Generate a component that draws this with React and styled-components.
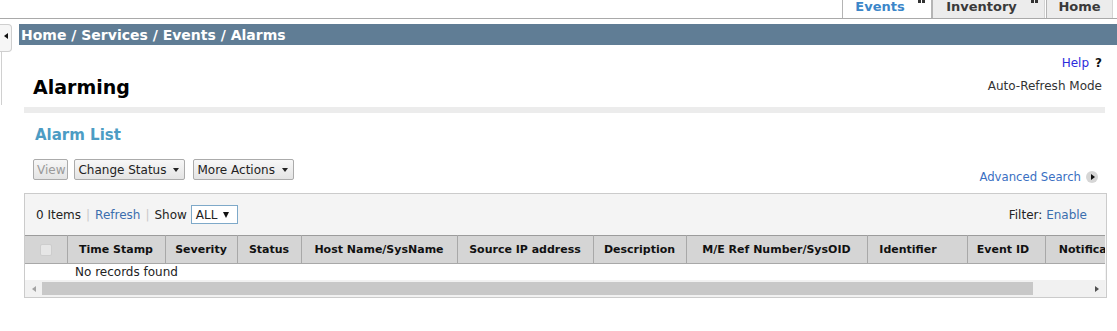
import React from "react";
import styled, { createGlobalStyle } from "styled-components";

const GlobalStyle = createGlobalStyle`
  html, body { margin: 0; padding: 0; background: #fff; }
  body { font-family: "DejaVu Sans", Verdana, sans-serif; font-size: 12px; color: #222; }
  * { box-sizing: border-box; }
`;

const Page = styled.div`
  width: 1117px;
  height: 331px;
  overflow: hidden;
`;

const TabsRow = styled.div`
  height: 19px;
  display: flex;
  justify-content: flex-end;
  border-bottom: 1px solid #a9a9a9;
  padding-right: 4px;
`;

const Tab = styled.div`
  position: relative;
  width: ${(p) => p.$w}px;
  height: 18px;
  margin-left: ${(p) => p.$gap || 0}px;
  padding-right: ${(p) => (p.$close ? 14 : 0)}px;
  background: ${(p) => (p.$active ? "#fff" : "#ececec")};
  border-left: 1px solid #b4b4b4;
  border-right: 1px solid ${(p) => (p.$active ? "#b4b4b4" : "#d4d4d4")};
  color: ${(p) => (p.$active ? "#3b86c9" : "#3a3a3a")};
  font-weight: bold;
  font-size: 13px;
  line-height: 13px;
  text-align: center;
  overflow: hidden;
`;

const TabClose = styled.span`
  position: absolute;
  right: 6px;
  top: 0;
  width: 7px;
  height: 3px;
  border-left: 3px solid #333;
  border-right: 3px solid #333;
`;

const Body = styled.div`
  display: flex;
  margin-top: 5px;
`;

const Side = styled.div`
  width: 19px;
  flex: none;
  display: flex;
  flex-direction: column;
`;

const Handle = styled.div`
  width: 12px;
  height: 28px;
  border: 1px solid #cfcfcf;
  border-left: none;
  border-radius: 0 4px 4px 0;
  background: #f6f6f6;
  display: flex;
  align-items: center;
  justify-content: center;
`;

const HandleArrow = styled.span`
  width: 0;
  height: 0;
  border-top: 3px solid transparent;
  border-bottom: 3px solid transparent;
  border-right: 4px solid #111;
  margin-top: -4px;
`;

const Rail = styled.div`
  width: 2px;
  height: 53px;
  border-left: 1px solid #d0d0d0;
  margin-left: 1px;
`;

const Main = styled.div`
  flex: 1;
  min-width: 0;
`;

const Breadcrumb = styled.div`
  height: 21px;
  background: #607d95;
  color: #fff;
  font-weight: bold;
  font-size: 14px;
  line-height: 22px;
  padding-left: 2px;
  white-space: nowrap;
`;

const HeadArea = styled.div`
  padding: 10px 15px 0 14px;
  display: flex;
  flex-direction: column;
`;

const HelpLine = styled.div`
  text-align: right;
  font-size: 12px;
  line-height: 16px;
`;

const HelpLink = styled.span`
  color: #2b2bdc;
`;

const HelpMark = styled.b`
  color: #111;
  margin-left: 6px;
`;

const TitleRow = styled.div`
  display: flex;
  justify-content: space-between;
  align-items: center;
  margin-top: 5px;
  height: 22px;
`;

const Title = styled.h1`
  margin: 0;
  font-size: 19px;
  font-weight: bold;
  color: #000;
`;

const AutoRefresh = styled.div`
  font-size: 12px;
  color: #333;
  margin-top: -3px;
`;

const Band = styled.div`
  height: 6px;
  background: #ececec;
  margin: 9px 12px 0 5px;
`;

const Section = styled.div`
  padding: 0 10px 0 5px;
`;

const SectionTitle = styled.h2`
  margin: 13px 0 0 11px;
  font-size: 15px;
  font-weight: bold;
  color: #4c9cc4;
  line-height: 18px;
`;

const ActionsRow = styled.div`
  display: flex;
  align-items: flex-end;
  margin-top: 15px;
  padding-left: 9px;
`;

const Btn = styled.button`
  height: 21px;
  padding: 0 ${(p) => (p.$menu ? 5 : 2)}px 0 3px;
  margin-right: ${(p) => p.$mr || 0}px;
  font-family: "DejaVu Sans", Verdana, sans-serif;
  font-size: 12px;
  color: ${(p) => (p.disabled ? "#9a9a9a" : "#222")};
  background: linear-gradient(#f7f7f7, #e4e4e4);
  border: 1px solid #ababab;
  border-radius: 2px;
  display: flex;
  align-items: center;
  gap: 7px;
`;

const Caret = styled.span`
  width: 0;
  height: 0;
  border-left: 3px solid transparent;
  border-right: 3px solid transparent;
  border-top: 4px solid #222;
`;

const AdvSearch = styled.div`
  margin-left: auto;
  margin-right: 9px;
  display: flex;
  align-items: center;
  gap: 5px;
  color: #3a6fc2;
  font-size: 11.7px;
  line-height: 14px;
  margin-bottom: -4px;
`;

const RoundArrow = styled.span`
  width: 12px;
  height: 12px;
  border-radius: 50%;
  background: #d6d6d6;
  display: flex;
  align-items: center;
  justify-content: center;
  &::after {
    content: "";
    border-top: 3px solid transparent;
    border-bottom: 3px solid transparent;
    border-left: 4px solid #111;
    margin-left: 1px;
  }
`;

const Panel = styled.div`
  margin-top: 13px;
  border: 1px solid #cbcbcb;
  background: #f4f4f4;
  padding-right: 1px;
`;

const PanelBar = styled.div`
  height: 41px;
  display: flex;
  align-items: center;
  padding: 0 18px 0 11px;
  font-size: 12px;
  color: #222;
`;

const Sep = styled.span`
  color: #c9c9c9;
  margin: 0 5px;
`;

const Link = styled.span`
  color: #3b6eae;
`;

const ShowSelect = styled.span`
  margin-left: 4px;
  height: 19px;
  width: 47px;
  border: 1px solid #7ea9c9;
  background: #fff;
  display: inline-flex;
  align-items: center;
  padding-left: 4px;
  gap: 6px;
  &::after {
    content: "";
    border-left: 3px solid transparent;
    border-right: 3px solid transparent;
    border-top: 6px solid #111;
  }
`;

const FilterBox = styled.div`
  margin-left: auto;
`;

const TableWrap = styled.div`
  overflow: hidden;
  width: 100%;
`;

const Table = styled.table`
  border-collapse: collapse;
  table-layout: fixed;
  width: 1120px;
`;

const Th = styled.th`
  width: ${(p) => p.$w}px;
  height: 28px;
  background: #d5d5d5;
  border: 1px solid #a8a8a8;
  border-top-color: #9c9c9c;
  font-size: 11px;
  font-weight: bold;
  color: #111;
  white-space: nowrap;
  overflow: hidden;
  padding: 0 ${(p) => p.$pr || 0}px 0 0;
  &:first-child { border-left: none; }
`;

const CheckBox = styled.span`
  display: inline-block;
  width: 12px;
  height: 12px;
  border: 1px solid #cdcdcd;
  border-radius: 2px;
  background: #e6e6e6;
  vertical-align: middle;
`;

const Td = styled.td`
  height: 16px;
  background: #fff;
  padding: 0 0 0 8px;
  font-size: 12px;
  color: #222;
  line-height: 16px;
  white-space: nowrap;
`;

const Scroll = styled.div`
  height: 17px;
  display: flex;
  align-items: center;
  background: #f1f1f1;
`;

const ScrollBtn = styled.span`
  width: 17px;
  height: 17px;
  flex: none;
  display: flex;
  align-items: center;
  justify-content: center;
  &::after {
    content: "";
    border-top: 3px solid transparent;
    border-bottom: 3px solid transparent;
    ${(p) =>
      p.$dir === "left"
        ? "border-right: 4px solid #a3a3a3;"
        : "border-left: 4px solid #505050;"}
  }
`;

const Track = styled.div`
  flex: 1;
  height: 13px;
`;

const Thumb = styled.div`
  width: 991px;
  height: 13px;
  background: #c8c8c8;
`;

const columns = [
  { label: "", w: 42 },
  { label: "Time Stamp", w: 98 },
  { label: "Severity", w: 72 },
  { label: "Status", w: 64 },
  { label: "Host Name/SysName", w: 156 },
  { label: "Source IP address", w: 136 },
  { label: "Description", w: 93 },
  { label: "M/E Ref Number/SysOID", w: 181 },
  { label: "Identifier", w: 100, pr: 18 },
  { label: "Event ID", w: 78, pr: 6 },
  { label: "Notification", w: 100 },
];

export default function App() {
  return (
    <Page>
      <GlobalStyle />
      <TabsRow>
        <Tab $w={90} $active $close>
          Events
          <TabClose />
        </Tab>
        <Tab $w={113} $close>
          Inventory
          <TabClose />
        </Tab>
        <Tab $w={67} $gap={1}>Home</Tab>
      </TabsRow>
      <Body>
        <Side>
          <Handle>
            <HandleArrow />
          </Handle>
          <Rail />
        </Side>
        <Main>
          <Breadcrumb>Home / Services / Events / Alarms</Breadcrumb>
          <HeadArea>
            <HelpLine>
              <HelpLink>Help</HelpLink>
              <HelpMark>?</HelpMark>
            </HelpLine>
            <TitleRow>
              <Title>Alarming</Title>
              <AutoRefresh>Auto-Refresh Mode</AutoRefresh>
            </TitleRow>
          </HeadArea>
          <Band />
          <Section>
            <SectionTitle>Alarm List</SectionTitle>
            <ActionsRow>
              <Btn disabled $mr={6}>View</Btn>
              <Btn $menu $mr={8}>
                Change Status <Caret />
              </Btn>
              <Btn $menu>
                More Actions <Caret />
              </Btn>
              <AdvSearch>
                Advanced Search <RoundArrow />
              </AdvSearch>
            </ActionsRow>
            <Panel>
              <PanelBar>
                0 Items<Sep>|</Sep>
                <Link>Refresh</Link>
                <Sep>|</Sep>Show
                <ShowSelect>ALL</ShowSelect>
                <FilterBox>
                  Filter: <Link>Enable</Link>
                </FilterBox>
              </PanelBar>
              <TableWrap>
                <Table>
                  <thead>
                    <tr>
                      {columns.map((c, i) => (
                        <Th key={i} $w={c.w} $pr={c.pr}>
                          {i === 0 ? <CheckBox /> : c.label}
                        </Th>
                      ))}
                    </tr>
                  </thead>
                  <tbody>
                    <tr>
                      <Td />
                      <Td colSpan={10}>No records found</Td>
                    </tr>
                  </tbody>
                </Table>
              </TableWrap>
              <Scroll>
                <ScrollBtn $dir="left" />
                <Track>
                  <Thumb />
                </Track>
                <ScrollBtn $dir="right" />
              </Scroll>
            </Panel>
          </Section>
        </Main>
      </Body>
    </Page>
  );
}
